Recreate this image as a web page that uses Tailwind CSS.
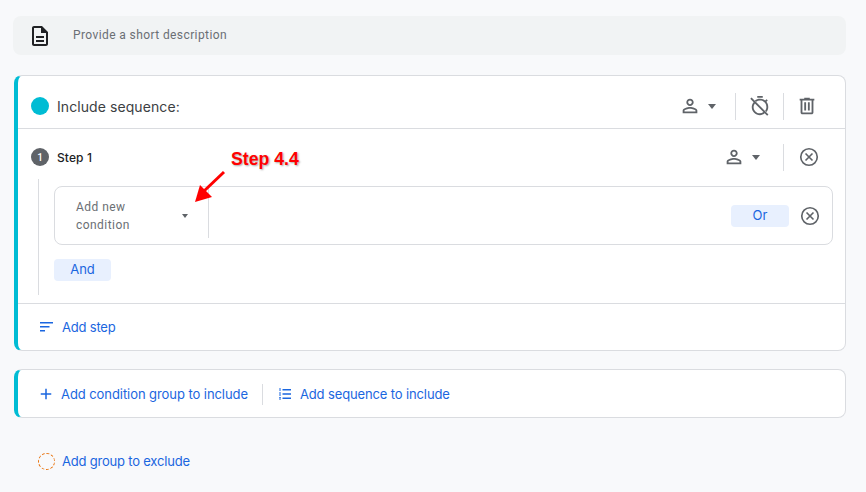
<!DOCTYPE html>
<html lang="en">
<head>
  <meta charset="UTF-8" />
  <title>Include sequence</title>
  <script src="https://cdn.jsdelivr.net/npm/@tailwindcss/browser@4"></script>
</head>
<body class="relative h-[492px] w-[866px] overflow-hidden bg-[#f8f9fb] font-['Roboto',sans-serif] text-[#3c4043]">
  <main class="flex flex-col pl-[14px] pr-5 pt-4">
    <!-- description -->
    <div class="-ml-px flex h-[39px] w-[833px] items-center rounded-lg bg-[#f1f3f4]">
      <svg class="ml-[15px] h-6 w-6" viewBox="0 0 24 24" fill="#202124"><path d="M14 2H6c-1.1 0-2 .9-2 2v16c0 1.1.9 2 2 2h12c1.1 0 2-.9 2-2V8l-6-6zm4 18H6V4h7v5h5v11zM8 12h8v2H8v-2zm0 4h8v2H8v-2z"/></svg>
      <span class="ml-[21px] -mt-px text-[12px] tracking-[0.4px] text-[#6b6f74]">Provide a short description</span>
    </div>

    <!-- include sequence card -->
    <section class="mt-5 flex h-[276px] w-[832px] flex-col rounded-lg border border-l-4 border-[#dadce0] border-l-[#00bcd4] bg-white">
      <div class="flex h-[53px] shrink-0 items-center border-b border-[#dadce0] pl-[13px] pt-2">
        <span class="h-[18px] w-[18px] rounded-full bg-[#00bcd4]"></span>
        <span class="ml-2 font-['Inter',sans-serif] text-[14px] tracking-[0.08px] text-[#3c4043]">Include sequence:</span>
        <div class="ml-auto flex items-center">
          <svg class="h-[22px] w-[22px]" viewBox="0 0 24 24" fill="#5f6368"><path d="M12 6c1.1 0 2 .9 2 2s-.9 2-2 2-2-.9-2-2 .9-2 2-2m0 9c2.7 0 5.8 1.29 6 2v1H6v-.99c.2-.72 3.3-2.01 6-2.01M12 4C9.79 4 8 5.79 8 8s1.79 4 4 4 4-1.79 4-4-1.79-4-4-4zm0 9c-2.67 0-8 1.34-8 4v3h16v-3c0-2.66-5.33-4-8-4z"/></svg>
          <span class="ml-[7px] h-0 w-0 border-x-[4px] border-t-[5px] border-x-transparent border-t-[#5f6368]"></span>
          <span class="ml-[19px] h-[27px] w-px bg-[#dadce0]"></span>
          <svg class="ml-[13px] h-[22px] w-[22px]" viewBox="0 0 24 24" fill="#5f6368"><path d="M9 1h6v2H9zM19.03 7.39l1.42-1.42c-.43-.51-.9-.99-1.41-1.41l-1.42 1.42C16.07 4.74 14.12 4 12 4c-2.11 0-4.07.74-5.62 1.97l1.42 1.42C9.01 6.52 10.45 6 12 6c3.87 0 7 3.13 7 7 0 1.55-.52 2.99-1.39 4.2l1.42 1.42C20.26 17.07 21 15.11 21 13c0-2.12-.74-4.07-1.97-5.61zM2.81 2.81 1.39 4.22l3.66 3.66C3.78 9.44 3 11.13 3 13c0 4.97 4.02 9 9 9 1.87 0 3.56-.78 5.12-2.05l2.66 2.66 1.41-1.41L2.81 2.81zM12 20c-3.87 0-7-3.13-7-7 0-1.32.46-2.55 1.47-3.71l9.24 9.24C14.55 19.54 13.32 20 12 20z"/></svg>
          <span class="ml-[12px] h-[27px] w-px bg-[#dadce0]"></span>
          <svg class="ml-[12px] mr-[27px] h-[22px] w-[22px]" viewBox="0 0 24 24" fill="#5f6368"><path d="M15 4V3H9v1H4v2h1v13c0 1.1.9 2 2 2h10c1.1 0 2-.9 2-2V6h1V4h-5zm2 15H7V6h10v13zM9 8h2v9H9V8zm4 0h2v9h-2V8z"/></svg>
        </div>
      </div>

      <div class="flex h-[175px] shrink-0 flex-col border-b border-[#dadce0]">
        <div class="flex h-[50px] shrink-0 items-center pl-[13px] pt-[6px]">
          <span class="flex h-[18px] w-[18px] items-center justify-center rounded-full bg-[#5f6368] text-[10px] font-medium text-white">1</span>
          <span class="ml-2 mt-px font-['Inter',sans-serif] text-[12px] font-medium tracking-[0.1px] text-[#202124]">Step 1</span>
          <div class="ml-auto flex items-center">
            <svg class="h-[22px] w-[22px]" viewBox="0 0 24 24" fill="#5f6368"><path d="M12 6c1.1 0 2 .9 2 2s-.9 2-2 2-2-.9-2-2 .9-2 2-2m0 9c2.7 0 5.8 1.29 6 2v1H6v-.99c.2-.72 3.3-2.01 6-2.01M12 4C9.79 4 8 5.79 8 8s1.79 4 4 4 4-1.79 4-4-1.79-4-4-4zm0 9c-2.67 0-8 1.34-8 4v3h16v-3c0-2.66-5.33-4-8-4z"/></svg>
            <span class="ml-[7px] h-0 w-0 border-x-[4px] border-t-[5px] border-x-transparent border-t-[#5f6368]"></span>
            <span class="ml-[23px] h-[27px] w-px bg-[#dadce0]"></span>
            <svg class="ml-[14px] mr-[25px] h-[22px] w-[22px]" viewBox="0 0 24 24" fill="none" stroke="#5f6368" stroke-width="1.8"><circle cx="12" cy="12" r="9"/><path d="M8.2 8.2l7.6 7.6M15.8 8.2l-7.6 7.6"/></svg>
          </div>
        </div>
        <div class="ml-5 flex h-[116px] w-[795px] flex-col border-l border-[#dadce0] pl-[15px] pt-[7px]">
          <div class="flex h-[59px] w-[779px] shrink-0 items-stretch rounded-lg border border-[#dadce0]">
            <div class="flex w-[153px] items-center pl-[21px]">
              <span class="w-[70px] text-[12px] leading-[18px] tracking-[0.45px] text-[#6b6f74]">Add new condition</span>
              <span class="ml-[36px] h-0 w-0 border-x-[3px] border-t-[4px] border-x-transparent border-t-[#5f6368]"></span>
            </div>
            <span class="h-[51px] w-px bg-[#dadce0]"></span>
            <div class="ml-auto flex items-center">
              <button class="flex h-[22px] w-[58px] items-center justify-center rounded-[4px] bg-[#e8f0fe] font-['Inter',sans-serif] text-[13px] text-[#1a66e0]">Or</button>
              <svg class="ml-[10px] mr-[11px] h-[22px] w-[22px]" viewBox="0 0 24 24" fill="none" stroke="#5f6368" stroke-width="1.8"><circle cx="12" cy="12" r="9"/><path d="M8.2 8.2l7.6 7.6M15.8 8.2l-7.6 7.6"/></svg>
            </div>
          </div>
          <button class="mt-[14px] flex h-[22px] w-[57px] shrink-0 items-center justify-center rounded-[4px] bg-[#e8f0fe] font-['Inter',sans-serif] text-[13px] text-[#1a66e0]">And</button>
        </div>
      </div>

      <div class="flex flex-1 items-center pl-[22px]">
        <svg class="h-[10px] w-[13px]" viewBox="0 0 13 10" fill="#1a66e0"><path d="M0 0h13v1.5H0zM0 4h9.5v1.5H0zM0 8h5v1.5H0z"/></svg>
        <span class="ml-[9px] mt-px font-['Inter',sans-serif] text-[13px] tracking-[-0.2px] text-[#1a66e0]">Add step</span>
      </div>
    </section>

    <!-- add groups -->
    <section class="mt-[18px] flex h-[49px] w-[832px] items-center rounded-lg border border-l-4 border-[#dadce0] border-l-[#00bcd4] bg-white pl-[19px] pt-px">
      <svg class="h-[18px] w-[18px]" viewBox="0 0 24 24" fill="#1a66e0"><path d="M19 13h-6v6h-2v-6H5v-2h6V5h2v6h6v2z"/></svg>
      <span class="ml-[6px] mt-px font-['Inter',sans-serif] text-[13px] tracking-[-0.07px] text-[#1a66e0]">Add condition group to include</span>
      <span class="ml-[14px] h-[21px] w-px bg-[#dadce0]"></span>
      <svg class="ml-[16px] h-[12px] w-[12px]" viewBox="0 0 12 12" fill="#1a66e0"><path d="M3.5 1H12v1.4H3.5zM3.5 5.3H12v1.4H3.5zM3.5 9.6H12V11H3.5zM0 .5h2v.8H0zM0 1.8h2v.8H0zM0 4.6h2v.8H0zM0 6.6h2v.8H0zM0 9h2v.8H0zM0 10.6h2v.8H0z"/></svg>
      <span class="ml-[9px] mt-px font-['Inter',sans-serif] text-[13px] tracking-[-0.13px] text-[#1a66e0]">Add sequence to include</span>
    </section>

    <div class="mt-[34px] flex items-center pl-6">
      <span class="h-[17px] w-[17px] rounded-full border border-dashed border-[#e8710a]"></span>
      <span class="ml-[7px] font-['Inter',sans-serif] text-[13px] tracking-[-0.2px] text-[#1a66e0]">Add group to exclude</span>
    </div>
  </main>

  <!-- annotation over the condition row -->
  <span class="absolute left-[231px] top-[149px] font-['Liberation_Sans',sans-serif] text-[17.7px] leading-5 font-bold text-[#f00] [text-shadow:1px_1px_2px_rgba(0,0,0,0.35)]">Step 4.4</span>
  <svg class="absolute left-[190px] top-[165px]" width="40" height="40" viewBox="0 0 40 40"><path d="M34 7 13 27" stroke="#f00" stroke-width="3" fill="none"/><path d="M5 37 10 20 22 32z" fill="#f00"/></svg>
</body>
</html>
